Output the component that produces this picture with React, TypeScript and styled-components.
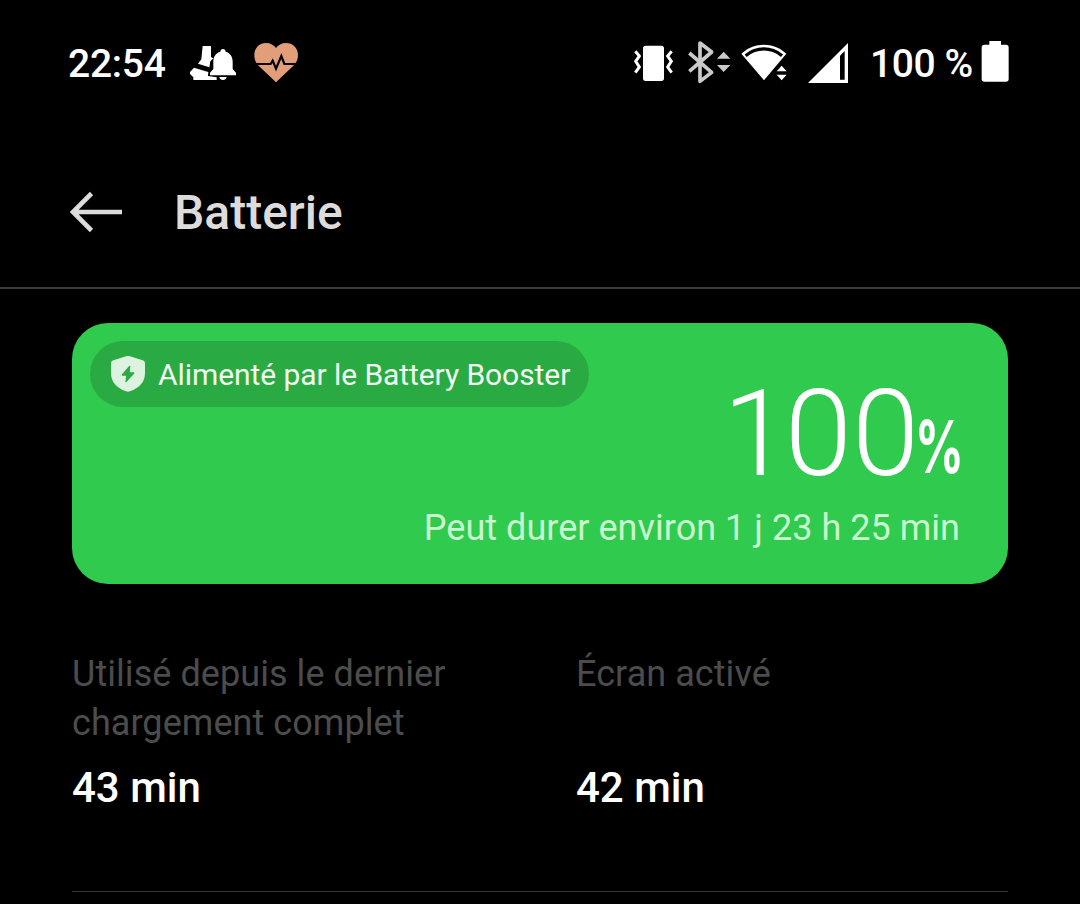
import styled, { createGlobalStyle } from "styled-components"

const GlobalStyle = createGlobalStyle`
  * { box-sizing: border-box; }
  body {
    margin: 0;
    background: #000;
    color: #fff;
    font-family: Roboto, "Liberation Sans", sans-serif;
  }
`

const Screen = styled.div`
  width: 1080px;
  height: 904px;
  overflow: hidden;
  background: #000;
`

const StatusBar = styled.header`
  display: flex;
  justify-content: space-between;
  height: 128px;
  padding: 36px 71px 0 68px;
`

const StatusGroup = styled.div`
  display: flex;
  align-items: center;
  height: 54px;
`

const StatusText = styled.span<{ $width: number; $left?: number; $spacing: number }>`
  width: ${(p) => p.$width}px;
  margin-left: ${(p) => p.$left ?? 0}px;
  padding-top: 2px;
  font-size: 39px;
  font-weight: 500;
  line-height: 54px;
  white-space: nowrap;
  letter-spacing: ${(p) => p.$spacing}px;
`

const Glyph = styled.svg<{ $left?: number; $lift?: number }>`
  display: block;
  flex: none;
  margin-left: ${(p) => p.$left ?? 0}px;
  margin-bottom: ${(p) => (p.$lift ?? 0) * 2}px;
`

const TitleBar = styled.div`
  display: flex;
  align-items: center;
  height: 161px;
  padding: 10px 68px 0;
  border-bottom: 2px solid #393939;
`

const Title = styled.h1`
  margin: 0 0 0 50px;
  color: #dcdcdc;
  font-size: 48px;
  font-weight: 500;
  line-height: 60px;
`

const Content = styled.main`
  padding: 34px 72px 0;
`

const BatteryCard = styled.section`
  display: flex;
  flex-direction: column;
  height: 261px;
  padding: 18px 48px 0 18px;
  border-radius: 36px;
  background: #2fca4e;
`

const Booster = styled.div`
  display: flex;
  align-items: center;
  align-self: flex-start;
  width: 499px;
  height: 66px;
  padding-left: 20px;
  border-radius: 33px;
  background: #2aaa42;
`

const BoosterText = styled.span`
  margin: 2px 0 0 12px;
  color: #f0fbf1;
  font-size: 30px;
  line-height: 40px;
  letter-spacing: -0.07px;
  white-space: nowrap;
`

const Level = styled.div`
  display: flex;
  justify-content: flex-end;
  align-items: baseline;
  height: 120px;
  margin-top: -33px;
  font-size: 121px;
  font-weight: 300;
  line-height: 120px;
`

const LeadDigit = styled.span`
  margin-right: -5px;
`

const Percent = styled.span`
  width: 43px;
  margin-left: -2px;
  font-family: Inter, Roboto, sans-serif;
  font-size: 73px;
  font-weight: 700;
  line-height: 72px;
  transform: translate(-2px, -2px) scaleX(0.66);
  transform-origin: left;
`

const Remaining = styled.p`
  margin: 9px 0 0;
  color: #c9f7cf;
  font-size: 36px;
  line-height: 50px;
  letter-spacing: 0.03px;
  text-align: right;
  white-space: nowrap;
`

const Stats = styled.section`
  display: grid;
  grid-template-columns: 1fr 1fr;
  column-gap: 72px;
  height: 308px;
  padding-top: 66px;
  border-bottom: 1px solid #333;
`

const Stat = styled.div`
  display: grid;
  grid-template-rows: 105px 66px;
  align-content: start;
`

const StatLabel = styled.span`
  color: #4c4c4c;
  font-size: 36px;
  line-height: 49px;
  letter-spacing: 0.06px;
`

const StatValue = styled.span`
  font-size: 42px;
  font-weight: 500;
  line-height: 66px;
`

function SleepBellIcon() {
  return (
    <Glyph $left={22} width="50" height="38" viewBox="0 0 150 114" fill="#fff">
      <path d="M44 6H69V39L76 43L67 52L64 70L30 59L40 46Z" />
      <path d="M18 71L61 84L60 96L86 100V108H16V100L6 90V84Z" />
      <path d="M105 15c5 0 8 4 8 8c14 4 21 15 21 30v22l10 11v8H66v-8l10-11V53c0-15 7-26 21-30c0-4 3-8 8-8Z" />
      <path d="M94 99H116C115 105 111 108 105 108S95 105 94 99Z" />
    </Glyph>
  )
}

function HeartRateIcon() {
  return (
    <Glyph $left={16} $lift={1} width="45" height="41" viewBox="0 0 135 123">
      <path fill="#e19e79" d="M66 121L17 74C4 62 1 51 1 38C1 17 17 3 36 3C49 3 60 9 66 18C72 9 83 3 96 3C115 3 132 17 132 38C132 51 128 62 115 74Z" />
      <path fill="none" stroke="#000" strokeWidth="6.5" d="M0 66H50L56 56L66 80L82 42L91 66H135" />
    </Glyph>
  )
}

function VibrateIcon() {
  return (
    <Glyph width="42" height="38" viewBox="0 0 126 114">
      <rect x="30" y="5" width="63" height="106" rx="8" fill="#fff" />
      <path fill="none" stroke="#fff" strokeWidth="9" d="M7 22L19 36L8 52L19 69L7 86M116 22L104 36L115 52L104 69L116 86" />
    </Glyph>
  )
}

function BluetoothIcon() {
  return (
    <Glyph $left={13} $lift={1} width="44" height="44" viewBox="0 0 132 132">
      <path fill="none" stroke="#cacaca" strokeWidth="11" strokeLinejoin="round" d="M4 39L71 97L36 124V9L71 36L4 94" />
      <path fill="#cacaca" d="M107 35L127 56H87ZM87 75H127L107 96Z" />
    </Glyph>
  )
}

function WifiIcon() {
  return (
    <Glyph $left={9} $lift={2} width="47" height="40" viewBox="0 0 141 120">
      <path fill="#fff" d="M1 38C39 2 98 2 136 38L69 118Z" />
      <path fill="none" stroke="#000" strokeWidth="10" d="M14 44C47 17 90 17 123 44" />
      <path fill="#000" d="M121 62L98 88V120H141V62Z" />
      <path fill="#fff" d="M122 74L137 91H107ZM107 101H137L122 118Z" />
    </Glyph>
  )
}

function SignalIcon() {
  return (
    <Glyph $left={20} width="42" height="42" viewBox="0 0 126 126">
      <path fill="#fff" d="M0 123H120V3Z" />
      <path fill="#000" d="M96 41L110 27V113H96Z" />
    </Glyph>
  )
}

function BatteryIcon() {
  return (
    <Glyph $lift={2} width="28" height="42" viewBox="0 0 84 126" fill="#fff">
      <path d="M25 3H60V14H75Q83 14 83 22V117Q83 125 75 125H10Q2 125 2 117V22Q2 14 10 14H25Z" />
    </Glyph>
  )
}

function BackIcon() {
  return (
    <Glyph $lift={1} width="56" height="44" viewBox="0 0 56 44" fill="none" stroke="#dcdcdc" strokeWidth="4.6">
      <path d="M5 22H54M23.5 3.5L5 22L23.5 40.5" />
    </Glyph>
  )
}

function ShieldIcon() {
  return (
    <Glyph width="36" height="38" viewBox="0 0 108 114">
      <path fill="#dcf3e0" d="M48 4Q54 1 60 4L98 16Q105 18 105 25V53C105 82 88 98 60 109Q54 111 48 109C20 98 3 82 3 53V25Q3 18 10 16Z" />
      <path fill="#2aaa42" stroke="#2aaa42" strokeWidth="4" strokeLinejoin="round" d="M59 34L37 60H51L48 80L71 54H57Z" />
    </Glyph>
  )
}

const stats = [
  { label: "Utilisé depuis le dernier chargement complet", value: "43 min" },
  { label: "Écran activé", value: "42 min" },
]

function App() {
  return (
    <Screen>
      <GlobalStyle />
      <StatusBar>
        <StatusGroup>
          <StatusText $width={98} $spacing={-0.25}>22:54</StatusText>
          <SleepBellIcon />
          <HeartRateIcon />
        </StatusGroup>
        <StatusGroup>
          <VibrateIcon />
          <BluetoothIcon />
          <WifiIcon />
          <SignalIcon />
          <StatusText $width={111} $left={20} $spacing={-0.4}>100 %</StatusText>
          <BatteryIcon />
        </StatusGroup>
      </StatusBar>
      <TitleBar>
        <BackIcon />
        <Title>Batterie</Title>
      </TitleBar>
      <Content>
        <BatteryCard>
          <Booster>
            <ShieldIcon />
            <BoosterText>Alimenté par le Battery Booster</BoosterText>
          </Booster>
          <Level>
            <LeadDigit>1</LeadDigit>00<Percent>%</Percent>
          </Level>
          <Remaining>Peut durer environ 1 j 23 h 25 min</Remaining>
        </BatteryCard>
        <Stats>
          {stats.map((s) => (
            <Stat key={s.value}>
              <StatLabel>{s.label}</StatLabel>
              <StatValue>{s.value}</StatValue>
            </Stat>
          ))}
        </Stats>
      </Content>
    </Screen>
  )
}

export default App
